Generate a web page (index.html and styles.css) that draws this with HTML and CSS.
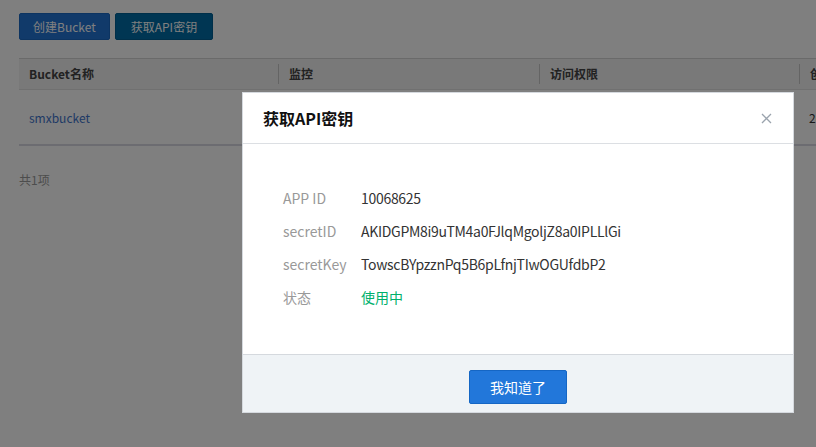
FILE: index.html
```html
<!DOCTYPE html>
<html lang="zh-CN">
<head>
<meta charset="utf-8">
<title>获取API密钥</title>
<link rel="stylesheet" href="styles.css">
</head>
<body>
<div class="page">
  <div class="toolbar">
    <button class="btn btn-primary">创建Bucket</button>
    <button class="btn btn-dark">获取API密钥</button>
  </div>
  <div class="table">
    <div class="thead">
      <div class="th">Bucket名称</div>
      <div class="th">监控</div>
      <div class="th">访问权限</div>
      <div class="th">创建时间</div>
    </div>
    <div class="tr">
      <div class="td"><a class="link">smxbucket</a></div>
      <div class="td"></div>
      <div class="td"></div>
      <div class="td">2016-08-12 10:21:35</div>
    </div>
  </div>
  <div class="total">共1项</div>
</div>
<div class="mask"></div>
<div class="modal">
  <div class="modal-head">
    <span class="modal-title">获取API密钥</span>
    <span class="close">
      <svg width="11" height="11" viewBox="0 0 11 11"><path d="M1 1L10 10M10 1L1 10" stroke="#9aa3ad" stroke-width="1.3" fill="none"/></svg>
    </span>
  </div>
  <div class="modal-body">
    <div class="row"><span class="label">APP ID</span><span class="value">10068625</span></div>
    <div class="row"><span class="label">secretID</span><span class="value">AKIDGPM8i9uTM4a0FJlqMgoljZ8a0IPLLlGi</span></div>
    <div class="row"><span class="label">secretKey</span><span class="value">TowscBYpzznPq5B6pLfnjTIwOGUfdbP2</span></div>
    <div class="row"><span class="label">状态</span><span class="value ok">使用中</span></div>
  </div>
  <div class="modal-foot">
    <button class="btn-ok">我知道了</button>
  </div>
</div>
</body>
</html>
```
FILE: styles.css
```css
* { box-sizing: border-box; }
html, body { margin: 0; padding: 0; }
body {
  width: 816px;
  height: 447px;
  overflow: hidden;
  background: #fff;
  font-family: "Noto Sans CJK SC", "Liberation Sans", sans-serif;
  font-size: 12px;
  color: #333;
  position: relative;
}
.page { padding: 13px 0 0 19px; width: 1100px; }
.toolbar { display: flex; gap: 5px; }
.btn {
  height: 27px;
  padding: 0 15px;
  border: 1px solid transparent;
  border-radius: 2px;
  font-family: inherit;
  font-size: 12px;
  color: #fff;
  line-height: 25px;
}
.btn-primary { background: #2274d5; border-color: #1a68c2; padding: 0 13px; }
.btn-dark { background: #006ca6; border-color: #005f92; }
.table { margin-top: 18px; width: 1060px; }
.thead {
  display: grid;
  grid-template-columns: 259px 261px 260px 280px;
  height: 32px;
  background: #f2f2f2;
  border-top: 1px solid #d4d4d4;
  border-bottom: 1px solid #e0e0e0;
  align-items: center;
}
.th {
  font-weight: bold;
  color: #444;
  padding-left: 10px;
  line-height: 20px;
  border-left: 1px solid #c8c8c8;
}
.th:first-child { border-left: none; }
.tr {
  display: grid;
  grid-template-columns: 259px 261px 260px 280px;
  height: 56px;
  align-items: center;
  border-bottom: 2px solid #d8d8e2;
}
.td { padding-left: 10px; }
.link { color: #3e74cc; }
.total { margin-top: 25px; color: #9a9a9a; font-size: 12px; }
.mask {
  position: absolute;
  inset: 0;
  background: rgba(0, 0, 0, 0.5);
}
.modal {
  position: absolute;
  left: 242px;
  top: 92px;
  width: 552px;
  background: #fff;
  border: 1px solid #d5d9de;
}
.modal-head {
  height: 51px;
  border-bottom: 1px solid #dcdfe3;
  display: flex;
  align-items: center;
  justify-content: space-between;
  padding: 0 21px 0 20px;
}
.modal-title { font-size: 16px; font-weight: bold; color: #111; }
.close { display: flex; }
.modal-body { padding: 37px 0 41px 40px; }
.row { display: flex; height: 33px; align-items: center; font-size: 14px; }
.label { width: 78px; color: #999; }
.value { color: #333; letter-spacing: -0.3px; }
.ok { color: #00b06c; letter-spacing: 0; }
.modal-foot {
  background: #eff3f6;
  border-top: 1px solid #d5d9de;
  display: flex;
  justify-content: center;
  padding: 15px 0 8px;
}
.btn-ok {
  width: 98px;
  height: 34px;
  background: #2277da;
  border: 1px solid #1566c4;
  border-radius: 2px;
  color: #fff;
  font-family: inherit;
  font-size: 14px;
}
```
